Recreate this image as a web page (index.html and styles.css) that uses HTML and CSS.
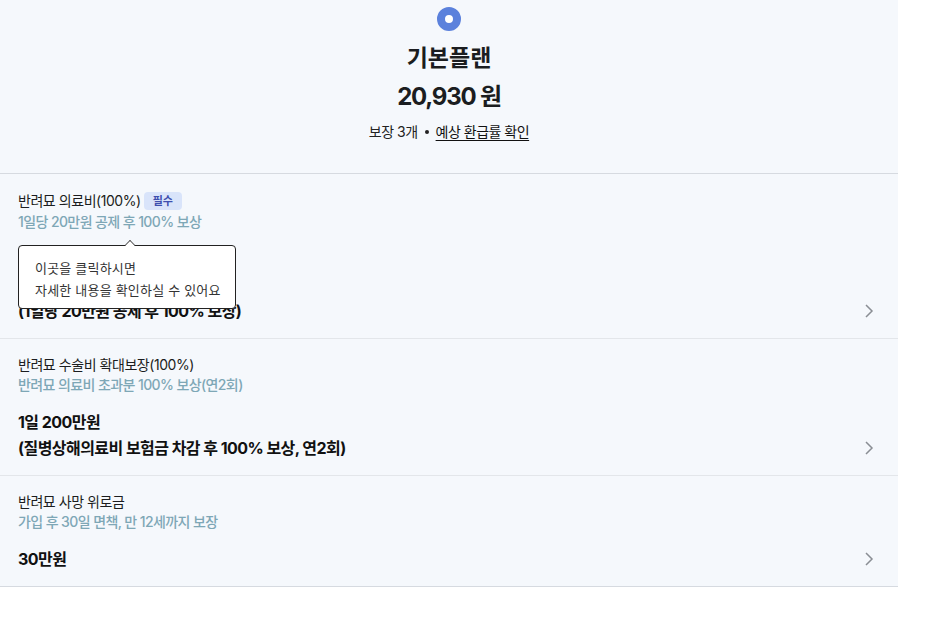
FILE: index.html
```html
<!DOCTYPE html>
<html lang="ko">
<head>
<meta charset="utf-8">
<link rel="stylesheet" href="styles.css">
</head>
<body>
<div class="page">
  <header class="plan-head">
    <span class="plan-icon"></span>
    <h1 class="plan-title">기본플랜</h1>
    <div class="plan-price">20,930 원</div>
    <div class="plan-meta"><span>보장 3개</span><span class="dot"></span><a class="meta-link">예상 환급률 확인</a></div>
  </header>
  <ul class="cover-list">
    <li class="cover">
      <div class="cover-body">
        <div class="cover-title first">반려묘 의료비(100%) <span class="badge">필수</span></div>
        <div class="cover-sub">1일당 20만원 공제 후 100% 보상</div>
        <div class="cover-value">
          <div class="value-hidden"></div>
          <div>(1일당 20만원 공제 후 100% 보상)</div>
        </div>
      </div>
      <svg class="chev" width="10" height="16" viewBox="0 0 10 16"><path d="M2 2l6 6-6 6" fill="none" stroke="#8a8e94" stroke-width="1.5"/></svg>
      <div class="tooltip">
        <span class="tip-arrow"></span>
        <div>이곳을 클릭하시면</div>
        <div>자세한 내용을 확인하실 수 있어요</div>
      </div>
    </li>
    <li class="cover">
      <div class="cover-body">
        <div class="cover-title">반려묘 수술비 확대보장(100%)</div>
        <div class="cover-sub">반려묘 의료비 초과분 100% 보상(연2회)</div>
        <div class="cover-value">
          <div>1일 200만원</div>
          <div>(질병상해의료비 보험금 차감 후 100% 보상, 연2회)</div>
        </div>
      </div>
      <svg class="chev" width="10" height="16" viewBox="0 0 10 16"><path d="M2 2l6 6-6 6" fill="none" stroke="#8a8e94" stroke-width="1.5"/></svg>
    </li>
    <li class="cover">
      <div class="cover-body">
        <div class="cover-title">반려묘 사망 위로금</div>
        <div class="cover-sub">가입 후 30일 면책, 만 12세까지 보장</div>
        <div class="cover-value">
          <div>30만원</div>
        </div>
      </div>
      <svg class="chev" width="10" height="16" viewBox="0 0 10 16"><path d="M2 2l6 6-6 6" fill="none" stroke="#8a8e94" stroke-width="1.5"/></svg>
    </li>
  </ul>
</div>
</body>
</html>
```
FILE: styles.css
```css
* { box-sizing: border-box; }
html, body { margin: 0; padding: 0; background: #fff; }
body {
  font-family: Inter, "Noto Sans CJK KR", sans-serif;
  color: #1b1d20;
}
.page {
  width: 898px;
  background: #f5f8fc;
}
.plan-head {
  display: flex;
  flex-direction: column;
  align-items: center;
  padding: 7px 0 31px;
  border-bottom: 1px solid #d6dae0;
}
.plan-icon {
  width: 24px;
  height: 24px;
  border-radius: 50%;
  border: 8px solid #5b81dc;
  background: #fff;
}
.plan-title {
  margin: 12px 0 0;
  font-size: 23px;
  line-height: 30px;
  font-weight: 700;
  letter-spacing: 0;
}
.plan-price {
  margin-top: 8px;
  font-size: 24px;
  line-height: 32px;
  font-weight: 700;
  letter-spacing: -1.2px;
}
.plan-meta {
  margin-top: 9px;
  display: flex;
  align-items: center;
  gap: 7px;
  font-size: 14px;
  line-height: 20px;
  color: #222;
  letter-spacing: -0.5px;
}
.dot {
  width: 4px;
  height: 4px;
  border-radius: 50%;
  background: #222;
}
.meta-link {
  text-decoration: underline;
  text-underline-offset: 3px;
  color: #111;
}
.cover-list {
  list-style: none;
  margin: 0;
  padding: 0;
}
.cover {
  position: relative;
  display: flex;
  align-items: flex-end;
  justify-content: space-between;
  padding: 16px 24px 14px 18px;
  border-bottom: 1px solid #e3e6ea;
}
.cover:last-child { border-bottom-color: #d6dae0; }
.cover-title {
  font-size: 14px;
  line-height: 20px;
  color: #1b1d20;
  letter-spacing: -0.45px;
  display: flex;
  align-items: center;
  gap: 3px;
}
.cover-title.first { height: 22px; }
.badge {
  display: inline-block;
  padding: 0 9px;
  height: 18px;
  line-height: 18px;
  border-radius: 4px;
  background: #d9e4fa;
  color: #3e4fae;
  font-size: 11px;
  font-weight: 700;
  letter-spacing: 0;
}
.cover-sub {
  font-size: 14px;
  line-height: 20px;
  font-weight: 500;
  color: #7ea7b6;
  letter-spacing: -0.6px;
}
.cover-value {
  margin-top: 14px;
  font-size: 16px;
  line-height: 26px;
  font-weight: 700;
  color: #111;
  letter-spacing: -0.55px;
}
.value-hidden { height: 52px; }
.chev {
  margin-bottom: 5px;
  flex: none;
}
.tooltip {
  position: absolute;
  left: 18px;
  top: 71px;
  width: 218px;
  padding: 11px 16px 7px;
  background: #fff;
  border: 1px solid #222;
  border-radius: 4px;
  font-size: 13px;
  line-height: 22px;
  color: #333;
  letter-spacing: 0.2px;
  white-space: nowrap;
}
.tip-arrow {
  position: absolute;
  left: 106px;
  top: -6px;
  width: 10px;
  height: 10px;
  background: #fff;
  border-left: 1px solid #222;
  border-top: 1px solid #222;
  transform: rotate(45deg) scale(0.7, 0.7);
  transform-origin: center;
}
```
